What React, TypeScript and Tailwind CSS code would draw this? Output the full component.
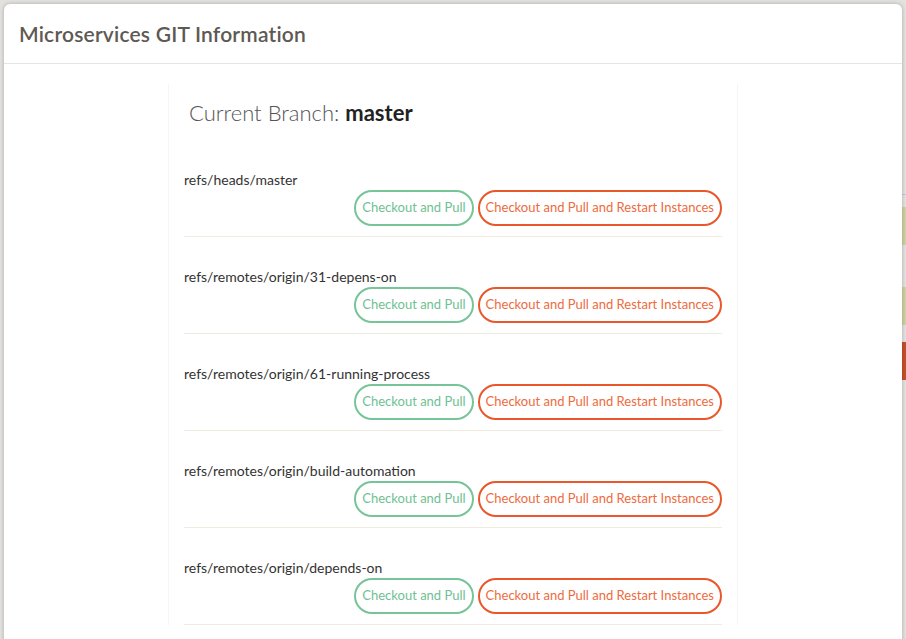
import React from "react";

const branches = [
  "refs/heads/master",
  "refs/remotes/origin/31-depens-on",
  "refs/remotes/origin/61-running-process",
  "refs/remotes/origin/build-automation",
  "refs/remotes/origin/depends-on",
];

function BranchRow({ name }: { name: string }) {
  return (
    <div className="pt-[30px]">
      <div className="h-[20px] text-[14px] leading-[20px] text-[#333]">{name}</div>
      <div className="flex justify-end gap-[4px]">
        <button
          type="button"
          className="h-[36px] rounded-full border-2 border-[#77c499] px-[6px] text-[13px] text-[#6fc193]"
        >
          Checkout and Pull
        </button>
        <button
          type="button"
          className="h-[36px] rounded-full border-2 border-[#e9572b] px-[6px] text-[13px] text-[#ee6b3e]"
        >
          Checkout and Pull and Restart Instances
        </button>
      </div>
      <div className="mt-[10px] h-px bg-[#f1ece0]" />
    </div>
  );
}

export default function App() {
  return (
    <div
      className="relative h-[639px] w-[906px] overflow-hidden bg-[#e3e2df]"
      style={{ fontFamily: "Lato, 'Noto Sans', sans-serif" }}
    >
      {/* page behind the overlay, only its edges peek out */}
      <div className="absolute right-0 top-[100px] flex w-[4px] flex-col">
        <div className="h-[95px] border-b border-[#c9c8c4]" />
        <div className="h-[12px]" />
        <div className="h-[38px] bg-[#cfd2a2]" />
        <div className="h-[42px]" />
        <div className="h-[38px] bg-[#cfd2a2]" />
        <div className="h-[17px]" />
        <div className="h-[38px] bg-[#c4512a]" />
      </div>

      <div className="absolute left-[4px] top-[4px] h-[700px] w-[898px] rounded-[6px] bg-white shadow-[0_0_4px_rgba(0,0,0,0.25)]">
        <div className="flex h-[60px] items-center border-b border-[#e5e5e5] px-[15px]">
          <h4 className="text-[21px] font-semibold tracking-[0.2px] text-[#5e5953]">
            Microservices GIT Information
          </h4>
        </div>
        <div className="flex justify-center pt-[20px]">
          <div className="w-[570px] border-x border-[#f5f5f5] px-[15px] pt-[14px]">
            <h3 className="pl-[5px] text-[22px] font-light leading-[30px] text-[#555]">
              Current Branch: <span className="font-bold text-[#222]">master</span>
            </h3>
            <div className="pt-[12px]">
              {branches.map((b) => (
                <BranchRow key={b} name={b} />
              ))}
            </div>
          </div>
        </div>
      </div>
    </div>
  );
}
